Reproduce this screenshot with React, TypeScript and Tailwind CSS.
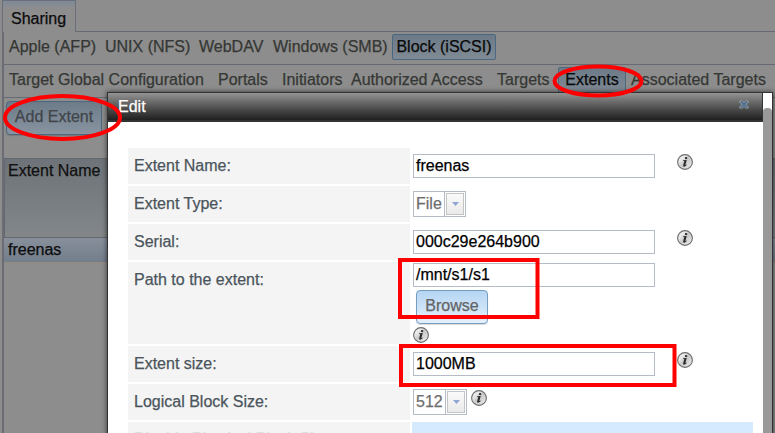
import type { ReactNode } from "react";

function InfoIcon({ className = "" }: { className?: string }) {
  return (
    <svg viewBox="0 0 16 16" className={`block size-4 shrink-0 ${className}`} aria-label="Help">
      <defs>
        <linearGradient id="info" x1="0" y1="0" x2="1" y2="1">
          <stop offset="0" stopColor="#f4f4f4" />
          <stop offset="0.3" stopColor="#e8e8e8" />
          <stop offset="0.5" stopColor="#c9c9c9" />
          <stop offset="1" stopColor="#f2f2f2" />
        </linearGradient>
      </defs>
      <circle cx="8" cy="8" r="7.4" fill="url(#info)" stroke="#6b6b6b" strokeWidth="1.1" />
      <ellipse cx="9.1" cy="4.1" rx="1.3" ry="1.1" fill="#2a2a2a" />
      <path d="M6.2 6.3L9.7 5.9L8.3 11.2L9.6 10.6L9.8 11.1Q8.3 12.9 6.8 12.8Q5.8 12.6 6.2 11.3L7.3 7.1L6 7.1Z" fill="#2a2a2a" />
    </svg>
  );
}

function TextField({ value }: { value: string }) {
  return (
    <div className="flex h-6 w-[242px] shrink-0 items-center border border-[#b5bcc7] bg-white pl-[2px] text-black">
      {value}
    </div>
  );
}

function Select({ value, width }: { value: string; width: string }) {
  return (
    <div className={`flex h-[26px] shrink-0 border border-[#b5bcc7] bg-white text-[#6e6e6e] ${width}`}>
      <span className="flex flex-1 items-center pl-[2px]">{value}</span>
      <span className="flex w-[21px] border-l border-[#b5bcc7] p-px">
        <span className="flex flex-1 items-center justify-center border border-[#c4c4c4] bg-linear-to-b from-[#fafafa] to-[#eaeaea]">
          <svg viewBox="0 0 7 4" className="h-1 w-[7px]">
            <path d="M0 0H7L3.5 4Z" fill="#8fa6d4" />
          </svg>
        </span>
      </span>
    </div>
  );
}

function Row({ label, height = "h-9", children }: { label: string; height?: string; children: ReactNode }) {
  return (
    <div className={`flex shrink-0 gap-[2px] ${height}`}>
      <div className="w-[282px] bg-[#f4f4f4] pt-[6px] pl-[6px] leading-6 text-[#4b545c]">{label}</div>
      <div className="w-[341px] pl-px">{children}</div>
    </div>
  );
}

function EditDialog() {
  return (
    <section className="absolute top-[92px] left-[107px] flex h-[360px] w-[666px] border border-[#333] bg-white shadow-[0_0_5px_rgba(0,0,0,0.65)]">
      <div className="flex w-[655px] flex-col">
        <header className="flex h-[29px] shrink-0 items-center justify-between border-r border-b-2 border-[#333] bg-linear-to-b from-[#949494] to-[#202020] pr-[13px] pl-[10px] text-white">
          <h2>Edit</h2>
          <svg viewBox="0 0 10 9" className="mb-[5px] h-[9px] w-[10px]">
            <path d="M0.5 0.5H3.5L5 2.2L6.5 0.5H9.5V2.5L7.3 4.5L9.5 6.5V8.5H6.5L5 6.8L3.5 8.5H0.5V6.5L2.7 4.5L0.5 2.5Z" fill="#8c9aa7" />
            <path d="M2 1.4L8 7.6M8 1.4L2 7.6" stroke="#4c6d8b" strokeWidth="1.6" />
          </svg>
        </header>
        <div className="flex flex-col gap-[2px] pt-[26px] pl-5">
          <Row label="Extent Name:">
            <div className="flex gap-[22px] pt-[6px]"><TextField value="freenas" /><InfoIcon /></div>
          </Row>
          <Row label="Extent Type:">
            <div className="pt-[5px]"><Select value="File" width="w-[53px]" /></div>
          </Row>
          <Row label="Serial:">
            <div className="flex gap-[22px] pt-[6px]"><TextField value="000c29e264b900" /><InfoIcon /></div>
          </Row>
          <Row label="Path to the extent:" height="h-[82px]">
            <div className="pt-px">
              <TextField value="/mnt/s1/s1" />
              <button className="mt-[3px] ml-[3px] flex h-[34px] w-[72px] items-center justify-center rounded-[4px] border border-[#759dc0] bg-linear-to-b from-[#b5d5f3] to-[#e4f0fb] pb-[2px] text-[#636363] shadow-[0_1px_1px_rgba(0,0,0,0.15)]">
                Browse
              </button>
              <InfoIcon className="mt-[3px]" />
            </div>
          </Row>
          <Row label="Extent size:">
            <div className="flex gap-[22px] pt-[6px]"><TextField value="1000MB" /><InfoIcon /></div>
          </Row>
          <Row label="Logical Block Size:">
            <div className="flex gap-1 pt-[5px]"><Select value="512" width="w-[54px]" /><InfoIcon className="mt-px" /></div>
          </Row>
          <div className="flex h-9 shrink-0 gap-[2px]">
            <div className="w-[282px] bg-[#f4f4f4] pt-[5px] pl-[6px] leading-6 text-[#dcdddd]">Disable Physical Block Size</div>
            <div className="w-[341px] bg-[#d5eaff]" />
          </div>
        </div>
      </div>
      <div className="flex w-[9px] flex-col bg-white pt-[15px]">
        <div className="flex-1 rounded-t-[4px] bg-[#999]" />
      </div>
    </section>
  );
}

export default function App() {
  return (
    <div className="relative h-[433px] w-[775px] overflow-hidden bg-[#8d8d8d] pl-[2px] font-['Liberation_Sans',Arial,sans-serif] text-[16px] leading-6 text-[#353734] [-webkit-text-stroke:0.25px_currentColor]">
      <div className="flex h-8">
        <div className="w-[74px] border-x border-t border-[#696e78] bg-linear-to-b from-[#7d8a98] to-[#8d8d8d] to-25% pt-[6px] pl-[8px] text-[#0b0b0b]">
          Sharing
        </div>
        <div className="flex-1 border-b border-[#666a73]" />
      </div>
      <main className="h-[401px] border-l-2 border-[#6b6c74]">
        <nav className="flex h-[33px] border-b border-[#666a73] pt-[2px] pl-[5px] whitespace-nowrap">
          <span className="w-24 pt-px">Apple (AFP)</span>
          <span className="w-[94px] pt-px">UNIX (NFS)</span>
          <span className="w-[74px] pt-px">WebDAV</span>
          <span className="w-[119px] pt-px">Windows (SMB)</span>
          <span className="flex h-[26px] w-[104px] items-center justify-center rounded-[2px] border border-[#4c6880] bg-linear-to-b from-[#6c7a88] to-[#7f8a94] text-[#090909]">Block (iSCSI)</span>
        </nav>
        <nav className="flex h-[33px] border-b border-[#666a73] pt-[2px] pl-[5px] whitespace-nowrap">
          <span className="w-[209px] pt-px">Target Global Configuration</span>
          <span className="w-16 pt-px">Portals</span>
          <span className="w-[69px] pt-px">Initiators</span>
          <span className="w-[146px] pt-px">Authorized Access</span>
          <span className="w-[61px] pt-px">Targets</span>
          <span className="mr-[5px] flex h-[26px] w-[68px] items-center justify-center rounded-[2px] border border-[#4c6880] bg-linear-to-b from-[#6c7a88] to-[#7f8a94] text-[#090909]">Extents</span>
          <span className="pt-px">Associated Targets</span>
        </nav>
        <div className="h-[60px] pt-[3px] pl-[2px]">
          <button className="flex h-[34px] w-24 items-center justify-center rounded-[4px] border border-[#4c6880] bg-linear-to-b from-[#6d7b89] to-[#8894a0] pb-[2px] text-[#41454a] shadow-[0_1px_1px_rgba(0,0,0,0.15)]">
            Add Extent
          </button>
        </div>
        <div className="h-20 border-y border-l border-[#626870] bg-linear-to-b from-[#6d7378] to-[#83878a] pl-[3px] text-[#101010]">
          Extent Name
        </div>
        <div className="h-[25px] border-b border-[#958a7c] bg-linear-to-b from-[#87909b] to-[#737e8b] pl-1 text-[#0b0b0b]">
          freenas
        </div>
      </main>
      <EditDialog />
      <svg viewBox="0 0 775 433" className="pointer-events-none absolute inset-0 h-[433px] w-[775px]" fill="none" stroke="#ff0000" strokeWidth="4">
        <ellipse cx="62.5" cy="117.5" rx="57.5" ry="21.5" />
        <ellipse cx="598" cy="81" rx="43.5" ry="14.5" />
        <rect x="400" y="260" width="137.5" height="57" />
        <rect x="401" y="346" width="273.5" height="39" />
      </svg>
    </div>
  );
}
